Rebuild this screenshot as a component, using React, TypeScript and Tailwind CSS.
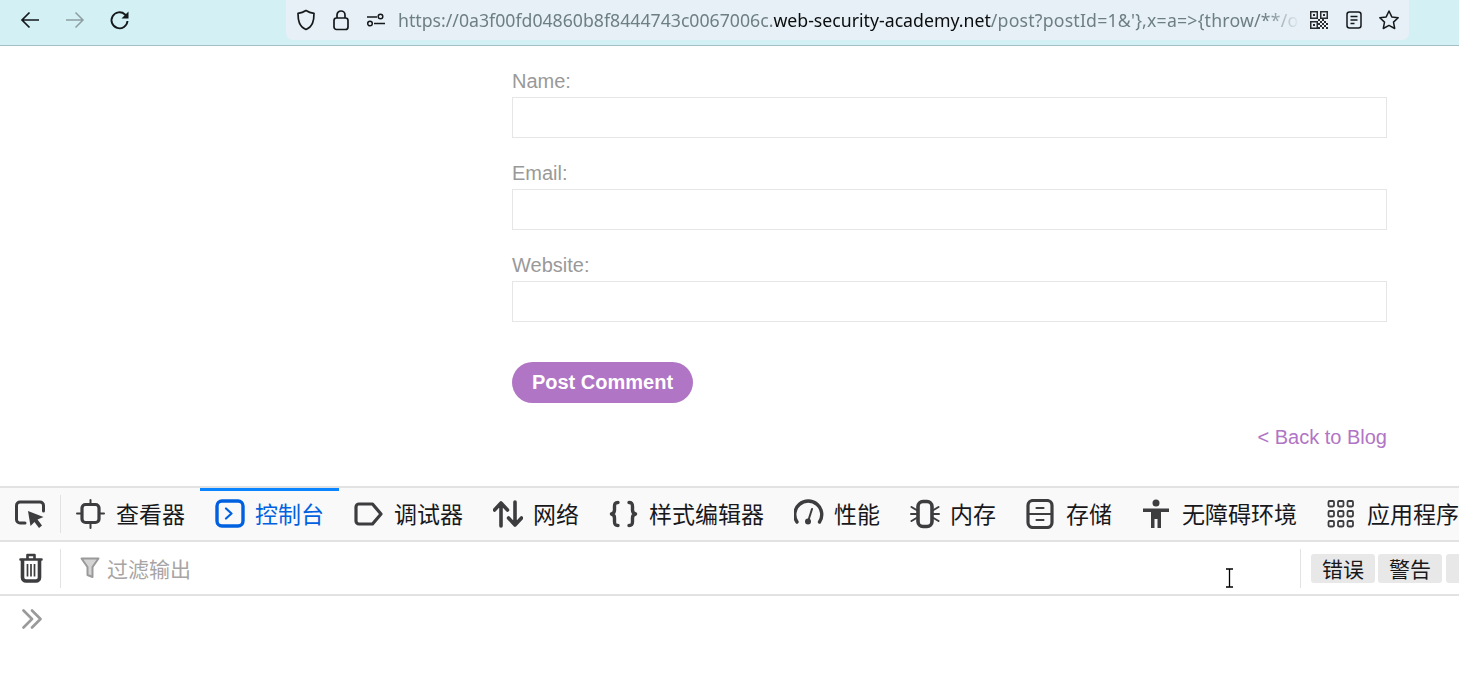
import React from 'react';

const cjk = "font-['Noto_Sans_CJK_SC','Noto_Sans',sans-serif]";

function Icon({ children, className = '' }: { children: React.ReactNode; className?: string }) {
  return (
    <svg
      viewBox="0 0 30 30"
      fill="none"
      stroke="currentColor"
      strokeWidth="2.6"
      strokeLinecap="round"
      strokeLinejoin="round"
      className={`w-[30px] h-[30px] shrink-0 ${className}`}
    >
      {children}
    </svg>
  );
}

const tabs: { label: string; icon: React.ReactNode; active?: boolean }[] = [
  {
    label: '查看器',
    icon: (
      <>
        <rect x="6" y="5.5" width="17" height="18" rx="3.5" strokeWidth="3.2" />
        <path d="M14.5 1v4M14.5 24v5M1 14.500h5M23 14.500h5" strokeWidth="2" />
      </>
    ),
  },
  {
    label: '控制台',
    active: true,
    icon: (
      <>
        <rect x="2" y="2" width="26" height="25" rx="5" strokeWidth="3.4" />
        <path d="M11 9.5l5.5 5-5.5 5" strokeWidth="2.2" />
      </>
    ),
  },
  {
    label: '调试器',
    icon: <path d="M5 5h13.500L27 15l-8.500 10H5a3 3 0 0 1-3-3V8a3 3 0 0 1 3-3z" strokeWidth="3.2" />,
  },
  {
    label: '网络',
    icon: <path d="M8 27V4M1.5 11L8 4l6.5 7M22 3v23M15.5 19l6.5 7 6.5-7" strokeWidth="3.6" />,
  },
  {
    label: '样式编辑器',
    icon: (
      <path
        d="M9 3.500c-3 0-3.500 1.500-3.500 4v3.500c0 2-1 3.500-3 4 2 .5 3 2 3 4v3.500c0 2.500.5 4 3.500 4M20 3.500c3 0 3.500 1.500 3.500 4v3.500c0 2 1 3.500 3 4-2 .5-3 2-3 4v3.500c0 2.500-.5 4-3.500 4"
        strokeWidth="3.4"
      />
    ),
  },
  {
    label: '性能',
    icon: (
      <>
        <path d="M3 23A13.500 13.500 0 1 1 25.500 23" strokeWidth="3.4" />
        <path d="M14.500 21l3.500-11" strokeWidth="2" />
        <circle cx="14" cy="22.500" r="3" fill="currentColor" stroke="none" />
      </>
    ),
  },
  {
    label: '内存',
    icon: (
      <>
        <rect x="8" y="2.500" width="14" height="25" rx="5" strokeWidth="3.6" />
        <path d="M1.500 8l5 3M1 15h5.500M1.500 22l5-3M28.500 8l-5 3M29 15h-5.500M28.500 22l-5-3" strokeWidth="2" />
      </>
    ),
  },
  {
    label: '存储',
    icon: (
      <>
        <rect x="2" y="1.5" width="24" height="27" rx="5" strokeWidth="3.2" />
        <path d="M2 15h24M10.500 9h7M10.500 21h7" strokeWidth="2.2" />
      </>
    ),
  },
  {
    label: '无障碍环境',
    icon: (
      <>
        <circle cx="14" cy="4" r="3.5" fill="currentColor" stroke="none" />
        <path d="M1 9.500h26v3.500h-8v16h-3.500v-9h-3v9H9V13H1z" fill="currentColor" stroke="none" />
      </>
    ),
  },
  {
    label: '应用程序',
    icon: (
      <g strokeWidth="1.8">
        <rect x="1.5" y="2" width="5.5" height="5.5" rx="1.2" />
        <rect x="11" y="2" width="5.5" height="5.5" rx="1.2" />
        <rect x="20.5" y="2" width="5.5" height="5.5" rx="1.2" />
        <rect x="1.5" y="12" width="5.5" height="5.5" rx="1.2" />
        <rect x="11" y="12" width="5.5" height="5.5" rx="1.2" />
        <rect x="20.5" y="12" width="5.5" height="5.5" rx="1.2" />
        <rect x="1.5" y="22" width="5.5" height="5.5" rx="1.2" />
        <rect x="11" y="22" width="5.5" height="5.5" rx="1.2" />
        <rect x="20.5" y="22" width="5.5" height="5.5" rx="1.2" />
      </g>
    ),
  },
];

function Field({ label }: { label: string }) {
  return (
    <div className="flex flex-col">
      <label className="text-[20px] leading-[23px] text-[#999999]">{label}</label>
      <input className="h-[41px] mt-[4px] border border-[#e6e6e6] bg-white" />
    </div>
  );
}

function BrowserBar() {
  return (
    <div className="h-[46px] shrink-0 bg-[#d3f0f4] border-b border-[#a3c0c7] flex items-start pl-[19px] pr-[50px]">
      {/* nav buttons */}
      <div className="flex items-center gap-[23px] h-[40px] text-[#15191c]">
        <svg viewBox="0 0 22 22" className="w-[22px] h-[22px]" fill="none" stroke="currentColor" strokeWidth="1.7">
          <path d="M20 11H3M10.5 3.500L3 11l7.500 7.500" />
        </svg>
        <svg viewBox="0 0 22 22" className="w-[22px] h-[22px] text-[#8f9ea1]" fill="none" stroke="currentColor" strokeWidth="1.5">
          <path d="M2 11h17M11.5 3.500L19 11l-7.500 7.500" />
        </svg>
        <svg viewBox="0 0 22 22" className="w-[22px] h-[22px]" fill="none" stroke="currentColor" strokeWidth="1.9">
          <path d="M18.5 12a8 8 0 1 1-2.500-6.500L18.500 8" />
          <path d="M19.5 2.500v7h-7z" fill="currentColor" stroke="none" />
        </svg>
      </div>

      {/* url bar */}
      <div className="ml-[155px] flex-1 h-[40px] bg-[#e6f0f6] rounded-b-[7px] flex items-center text-[#15191c]">
        <svg viewBox="0 0 20 22" className="w-[20px] h-[22px] ml-[10px] shrink-0" fill="none" stroke="currentColor" strokeWidth="1.7">
          <path d="M10 1.500c2.500 1.700 5 2.500 8 2.800 0 7-1 13-8 16.200-7-3.200-8-9.200-8-16.200 3-.3 5.500-1.100 8-2.800z" strokeLinejoin="round" />
        </svg>
        <svg viewBox="0 0 18 22" className="w-[18px] h-[22px] ml-[16px] shrink-0" fill="none" stroke="currentColor" strokeWidth="1.7">
          <rect x="2" y="9" width="14" height="11.5" rx="2.5" />
          <path d="M5 9V6a4 4 0 0 1 8 0v3" />
        </svg>
        <svg viewBox="0 0 20 14" className="w-[20px] h-[14px] ml-[16px] shrink-0" fill="none" stroke="currentColor" strokeWidth="1.5">
          <circle cx="14.5" cy="3.5" r="2.3" />
          <circle cx="4" cy="10.5" r="2.3" />
          <path d="M1 4h10M8 10.500h11" />
        </svg>
        <div className="ml-[12px] w-[902px] shrink-0 overflow-hidden whitespace-nowrap text-[17.7px] leading-[40px] text-[#6d7f82] font-['Noto_Sans',sans-serif] [mask-image:linear-gradient(to_right,black_96%,transparent)]">
          https://0a3f00fd04860b8f8444743c0067006c.
          <span className="text-[#0a0c0d]">web-security-academy.net</span>
          <span className="tracking-[0.2px]">{"/post?postId=1&'},x=a=>{throw/**/onerror=alert,throw"}</span>
        </div>
        {/* qr code */}
        <svg viewBox="0 0 18 18" className="w-[18px] h-[18px] ml-[10px] shrink-0 text-[#2a2d30]" fill="currentColor">
          <path
            d="M0 0h8v8H0zM1.500 1.500v5h5v-5zM10 0h8v8h-8zM11.500 1.500v5h5v-5zM0 10h8v8H0zM1.500 11.500v5h5v-5z"
            fillRule="evenodd"
          />
          <path d="M3 3h2v2H3zM13 3h2v2h-2zM3 13h2v2H3zM8 8h2v2H8zM10 10h2v2h-2zM12 8h2v2h-2zM14 10h2v2h-2zM16 12h2v2h-2zM12 12h2v2h-2zM10 14h2v2h-2zM14 14h2v2h-2zM12 16h2v2h-2zM16 16h2v2h-2zM8 12h2v2H8zM8 16h2v2H8z" />
        </svg>
        <svg viewBox="0 0 16 18" className="w-[16px] h-[18px] ml-[18px] shrink-0" fill="none" stroke="currentColor" strokeWidth="1.5">
          <rect x="1" y="1" width="14" height="16" rx="2.5" />
          <path d="M4.5 5.500h7M4.500 9h7M4.500 12.500h4" />
        </svg>
        <svg viewBox="0 0 22 22" className="w-[22px] h-[22px] ml-[16px] shrink-0" fill="none" stroke="currentColor" strokeWidth="1.5" strokeLinejoin="round">
          <path d="M11 2l2.800 5.900 6.400.8-4.700 4.400 1.200 6.400-5.700-3.100-5.700 3.100 1.200-6.400-4.700-4.400 6.400-.8z" />
        </svg>
      </div>
    </div>
  );
}

function BlogForm() {
  return (
    <div className="h-[440px] shrink-0 bg-white pl-[512px] pr-[72px] pt-[24px] flex flex-col font-['Liberation_Sans',sans-serif]">
      <div className="flex flex-col gap-[24px]">
        <Field label="Name:" />
        <Field label="Email:" />
        <Field label="Website:" />
      </div>
      <button className="mt-[40px] w-[181px] h-[41px] pb-[1px] rounded-full bg-[#b175c5] text-white text-[20px] font-bold">
        Post Comment
      </button>
      <a className="mt-[23px] self-end text-[20px] leading-[23px] text-[#b175c5]">&lt; Back to Blog</a>
    </div>
  );
}

function DevTools() {
  return (
    <div className={`flex-1 flex flex-col bg-white relative ${cjk}`}>
      {/* tool tabs */}
      <div className="h-[56px] shrink-0 border-t-2 border-b-2 border-[#e2e2e2] bg-[#f9f9fa] flex overflow-hidden">
        <div className="w-[60px] shrink-0 flex items-center pl-[15px]">
          <svg viewBox="0 0 30 30" className="w-[30px] h-[30px] text-[#3d3d40]" fill="none" stroke="currentColor" strokeWidth="3" strokeLinejoin="round" strokeLinecap="round">
            <path d="M10 24H5a3.500 3.500 0 0 1-3.500-3.500v-14A3.500 3.500 0 0 1 5 3h20a3.500 3.500 0 0 1 3.500 3.500V12" />
            <path d="M13 12l15.500 6-6 2.500 4.500 6-3 2.500-4.500-6-4 4z" fill="currentColor" stroke="none" />
          </svg>
        </div>
        <div className="w-px h-[38px] self-center bg-[#e2e2e2] shrink-0" />
        {tabs.map((t) => (
          <div
            key={t.label}
            className={`relative shrink-0 flex items-center gap-[10px] px-[15px] text-[23px] ${
              t.active ? 'text-[#0061e0]' : 'text-[#18181b]'
            }`}
          >
            {t.active && <div className="absolute top-0 left-0 right-0 h-[3px] bg-[#0a84ff]" />}
            <span className={t.active ? 'text-[#0061e0]' : 'text-[#3d3d40]'}>
              <Icon>{t.icon}</Icon>
            </span>
            <span className="leading-none whitespace-nowrap mb-[2px]">{t.label}</span>
          </div>
        ))}
      </div>

      {/* filter row */}
      <div className="h-[54px] shrink-0 border-b-2 border-[#e2e2e2] flex items-center overflow-hidden">
        <div className="w-[60px] shrink-0 flex justify-center pl-[1px]">
          <svg viewBox="0 0 24 30" className="w-[24px] h-[30px] text-[#3d3d40]" fill="none" stroke="currentColor" strokeWidth="3.6" strokeLinecap="round" strokeLinejoin="round">
            <path d="M1.500 6.500h21M8.500 5.500V2h7v3.500" strokeWidth="2.6" />
            <path d="M3.500 7.500v17a3.500 3.500 0 0 0 3.500 3.500h10a3.500 3.500 0 0 0 3.500-3.500v-17" />
            <path d="M8.500 11v12.500M12 11v12.500M15.500 11v12.500" strokeWidth="1.7" strokeLinecap="butt" />
          </svg>
        </div>
        <div className="w-px h-[39px] bg-[#e2e2e2] shrink-0" />
        <svg viewBox="0 0 20 22" className="w-[20px] h-[22px] ml-[19px] text-[#9a9a9a] shrink-0" fill="#d4d4d4" stroke="currentColor" strokeWidth="2" strokeLinejoin="round">
          <path d="M1.500 1.500h17l-6 8.500v10l-5-2V10z" />
        </svg>
        <span className="ml-[7px] w-[84px] shrink-0 text-[21px] text-[#a8a4a4] leading-none whitespace-nowrap">过滤输出</span>
        <div className="ml-[1109px] w-px h-[39px] bg-[#e2e2e2] shrink-0" />
        <div className="ml-[10px] flex gap-[3px] shrink-0 text-[21px] text-[#18181b]">
          <span className="w-[64px] h-[29px] bg-[#e8e8e8] rounded-[3px] flex items-center justify-center leading-none">错误</span>
          <span className="w-[64px] h-[29px] bg-[#e8e8e8] rounded-[3px] flex items-center justify-center leading-none">警告</span>
          <span className="w-[64px] h-[29px] bg-[#e8e8e8] rounded-[3px] ml-[1px]" />
        </div>
      </div>

      {/* console prompt */}
      <div className="pl-[22px] pt-[13px] text-[#9a9a9a]">
        <svg viewBox="0 0 20 20" className="w-[20px] h-[20px]" fill="none" stroke="currentColor" strokeWidth="2.6" strokeLinecap="round" strokeLinejoin="round">
          <path d="M1.5 1.500L10 10l-8.500 8.500M10 1.500L18.500 10 10 18.500" />
        </svg>
      </div>

      {/* mouse cursor */}
      <svg viewBox="0 0 9 20" className="absolute left-[1225px] top-[82px] w-[9px] h-[20px] text-black" fill="none" stroke="currentColor" strokeWidth="1.3">
        <path d="M1 1h7M1 19h7M4.500 1v18" />
      </svg>
    </div>
  );
}

export default function App() {
  return (
    <div className="w-[1459px] h-[693px] overflow-hidden flex flex-col bg-white">
      <BrowserBar />
      <BlogForm />
      <DevTools />
    </div>
  );
}
